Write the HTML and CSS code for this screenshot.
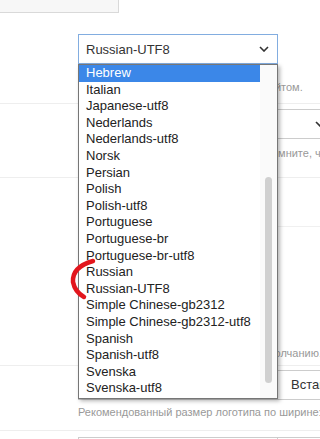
FILE: index.html
```html
<!DOCTYPE html>
<html lang="ru">
<head>
    <meta charset="UTF-8">
    <meta name="viewport" content="width=device-width, initial-scale=1.0">
    <title>Настройки сайта</title>
    <link rel="stylesheet" href="styles.css">
</head>
<body>
    <div class="page">
        <div class="top">
            <div class="prev-input"></div>
            <span class="prev-note">ду</span>
        </div>

        <div class="row row-first">
            <div class="label"></div>
            <div class="field">
                <div class="select select-short focused">
                    <span>Russian-UTF8</span>
                    <svg class="chevron" width="10" height="6" viewBox="0 0 10 6"><path d="M1 1l4 4 4-4" fill="none" stroke="#333" stroke-width="1.6"/></svg>
                </div>
                <p class="help help-first">Кодировка символов, применяемая сайтом.</p>
            </div>
        </div>

        <div class="row row-second">
            <div class="label"></div>
            <div class="field">
                <div class="select select-wide">
                    <span>Русский</span>
                    <svg class="chevron" width="10" height="6" viewBox="0 0 10 6"><path d="M1 1l4 4 4-4" fill="none" stroke="#333" stroke-width="1.6"/></svg>
                </div>
                <p class="help help-second">При смене языка интерфейса сайта помните, что шаблоны не будут изменены.</p>
            </div>
        </div>

        <div class="row row-third">
            <div class="label"></div>
            <div class="field">
                <div class="sub-line"></div>
                <p class="help help-third">Эта кодировка будет применена по умолчанию.</p>
            </div>
        </div>

        <div class="row row-fourth">
            <div class="label"></div>
            <div class="field">
                <div class="input-group">
                    <div class="input"></div>
                    <div class="btn">Вставить</div>
                </div>
                <p class="help help-fourth">Рекомендованный размер логотипа по ширине: 200px.</p>
            </div>
        </div>

        <div class="row row-fifth">
            <div class="label"></div>
            <div class="field">
                <div class="input-group">
                    <div class="input"></div>
                    <div class="btn">Вставить</div>
                </div>
            </div>
        </div>

        <!-- открытый список кодировок -->
        <div class="dropdown">
            <div class="options">
                <div class="option active">Hebrew</div>
                <div class="option">Italian</div>
                <div class="option">Japanese-utf8</div>
                <div class="option">Nederlands</div>
                <div class="option">Nederlands-utf8</div>
                <div class="option">Norsk</div>
                <div class="option">Persian</div>
                <div class="option">Polish</div>
                <div class="option">Polish-utf8</div>
                <div class="option">Portuguese</div>
                <div class="option">Portuguese-br</div>
                <div class="option">Portuguese-br-utf8</div>
                <div class="option">Russian</div>
                <div class="option">Russian-UTF8</div>
                <div class="option">Simple Chinese-gb2312</div>
                <div class="option">Simple Chinese-gb2312-utf8</div>
                <div class="option">Spanish</div>
                <div class="option">Spanish-utf8</div>
                <div class="option">Svenska</div>
                <div class="option">Svenska-utf8</div>
            </div>
            <div class="scrollbar"><div class="thumb"></div></div>
        </div>

        <!-- красная пометка -->
        <svg class="mark" width="320" height="439" viewBox="0 0 320 439">
            <path d="M93 261 Q72 267 73 282 Q75 292 84 297" fill="none" stroke="#e2161d" stroke-width="4.5" stroke-linecap="round"/>
        </svg>
    </div>
</body>
</html>
```

FILE: styles.css
```css
body {
    margin: 0;
    background: #fff;
    font-family: 'Liberation Sans', Arial, sans-serif;
    color: #333;
}
.page {
    position: relative;
    width: 320px;
    height: 439px;
    overflow: hidden;
}
.top {
    display: flex;
    height: 13px;
}
.prev-input {
    width: 119px;
    height: 31px;
    margin-top: -18px;
    box-sizing: border-box;
    border: 1px solid #d9d9d9;
    border-left: none;
    background: #f7f7f7;
}
.prev-note {
    margin: -14px 0 0 129px;
    font-size: 13px;
    line-height: 14px;
    color: #555;
}
.row {
    display: grid;
    grid-template-columns: 78px 1fr;
    border-top: 1px solid #eee;
}
.row-first {
    border-top: none;
    padding: 21px 0 7px 0;
}
.row-second {
    padding: 5px 0 15px 0;
}
.row-third {
    height: 187px;
}
.row-fourth {
    padding: 4px 0 9px 0;
}
.row-fifth {
    padding-top: 6px;
}
.field {
    min-width: 0;
}
.select {
    height: 30px;
    box-sizing: border-box;
    border: 1px solid #ccc;
    background: #fff;
    display: flex;
    align-items: center;
    justify-content: space-between;
    padding: 0 8px 0 7px;
    font-size: 13px;
    color: #333;
}
.select.focused {
    border-color: #82ade0;
}
.select-short {
    width: 200px;
}
.select-wide {
    width: 256px;
}
.chevron {
    display: block;
}
.help {
    margin: 0;
    font-size: 11px;
    line-height: 17px;
    color: #999;
    white-space: nowrap;
}
.help-first {
    margin-top: 15px;
}
.help-second {
    margin-top: 6px;
}
.sub-line {
    height: 48px;
    border-bottom: 1px solid #f0f0f0;
}
.help-third {
    margin-top: 118px;
}
.help-fourth {
    margin-top: 4px;
}
.input-group {
    display: flex;
    height: 30px;
}
.input {
    width: 199px;
    flex: none;
    box-sizing: border-box;
    border: 1px solid #ccc;
    border-right: none;
}
.btn {
    flex: none;
    box-sizing: border-box;
    border: 1px solid #ccc;
    padding: 0 13px;
    font-size: 13px;
    line-height: 28px;
    color: #333;
    background: #fff;
}
.dropdown {
    position: absolute;
    left: 78px;
    top: 64px;
    width: 200px;
    height: 335px;
    box-sizing: border-box;
    border: 1px solid #767676;
    background: #fff;
    box-shadow: 2px 2px 4px rgba(0,0,0,0.3);
    display: flex;
}
.options {
    flex: 1;
    min-width: 0;
}
.option {
    height: 16.6px;
    line-height: 16.6px;
    padding-left: 7px;
    font-size: 13px;
    color: #222;
    white-space: nowrap;
}
.option.active {
    background: #3b87e8;
    color: #fff;
}
.scrollbar {
    width: 17px;
    flex: none;
    background: #fafafa;
    padding: 112px 0 0 5px;
    box-sizing: border-box;
}
.thumb {
    width: 7px;
    height: 206px;
    border-radius: 4px;
    background: #d0d0d0;
}
.mark {
    position: absolute;
    left: 0;
    top: 0;
    pointer-events: none;
}
```
